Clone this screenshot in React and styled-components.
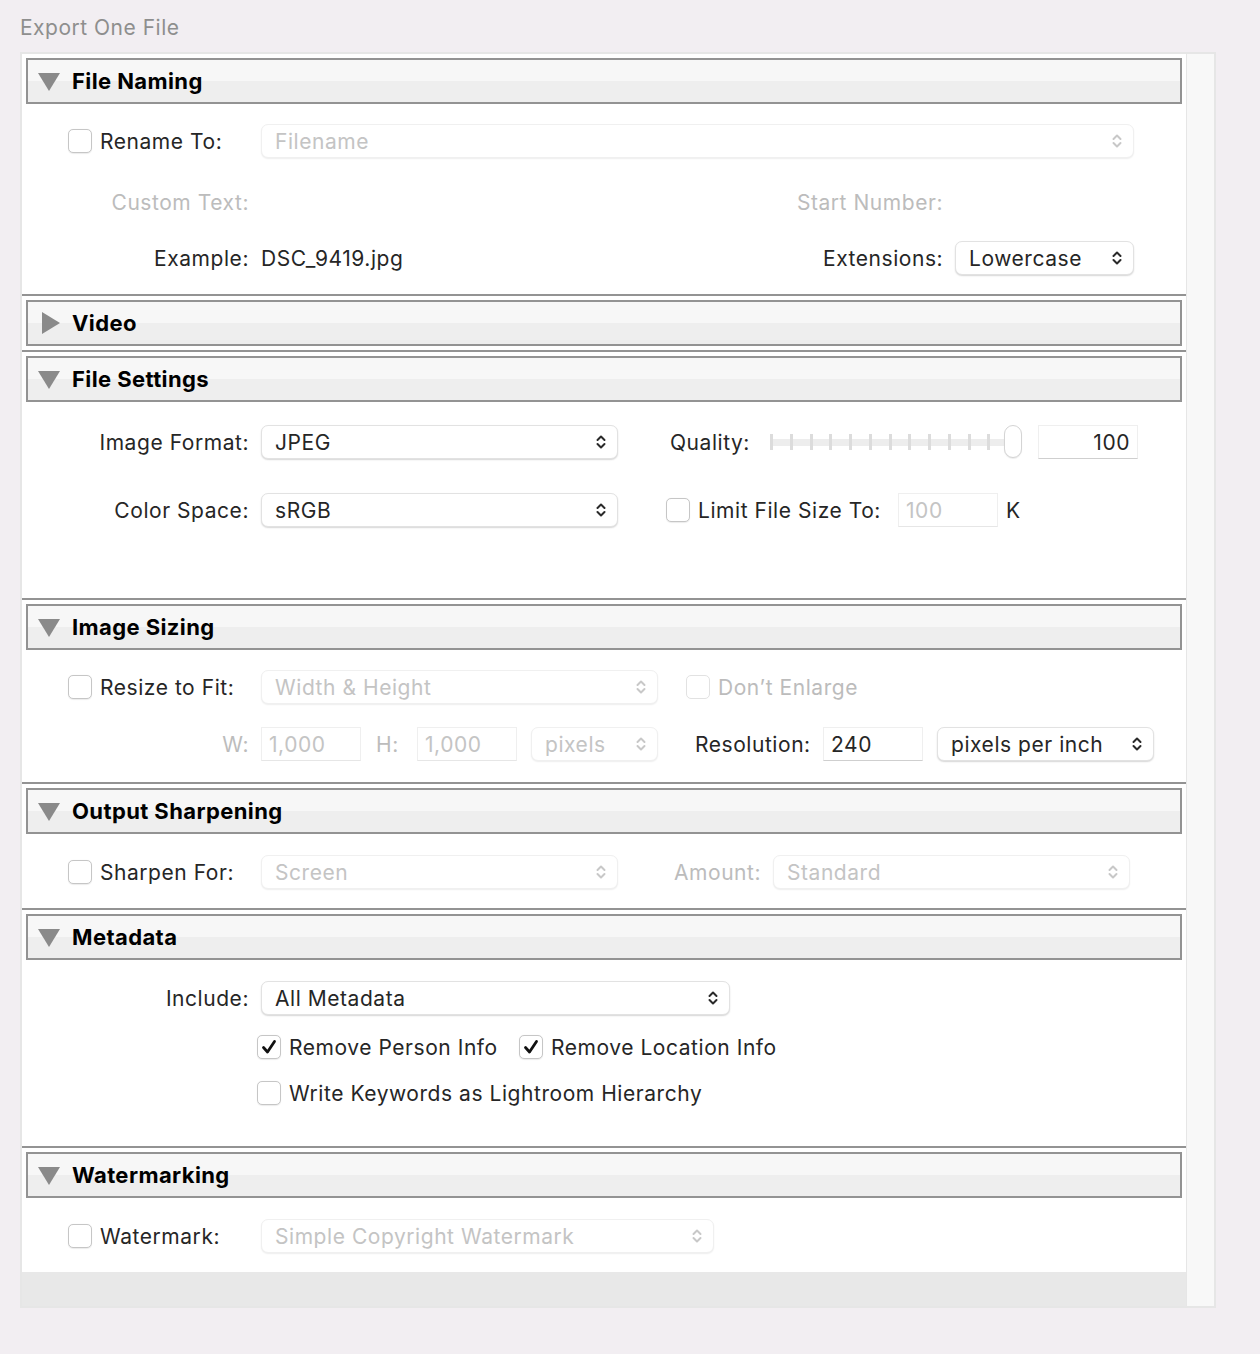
import React from "react";
import styled, { createGlobalStyle } from "styled-components";

const GlobalStyle = createGlobalStyle`
  body {
    margin: 0;
    background: #f2eef2;
    font-family: Inter, "Noto Sans", sans-serif;
    letter-spacing: 0.55px;
  }
`;

const Page = styled.div`
  width: 1260px;
  height: 1354px;
`;

const Title = styled.div`
  height: 52px;
  padding-left: 20px;
  line-height: 56px;
  font-size: 21px;
  letter-spacing: 0.5px;
  color: #8e8e8e;
`;

const Frame = styled.div`
  margin-left: 20px;
  width: 1196px;
  height: 1256px;
  box-sizing: border-box;
  border: 2px solid #e6e6e6;
  background: #e8e8e8;
  display: flex;
`;

const Panel = styled.div`
  width: 1164px;
  align-self: flex-start;
  background: #fff;
`;

const Scrollbar = styled.div`
  flex: 1;
  background: #f8f8f8;
  border-left: 1px solid #e6e6e6;
`;

const Section = styled.section`
  border-top: ${(p) => (p.$first ? "none" : "2px solid #939393")};
  padding-top: 4px;
`;

const Header = styled.div`
  margin: 0 4px;
  height: 46px;
  box-sizing: border-box;
  border: 2px solid #939393;
  background: linear-gradient(#f7f7f7 50%, #eeeeee 50%);
  display: flex;
  align-items: center;
  gap: 12px;
  padding-left: 10px;
  font-size: 22px;
  font-weight: 700;
  letter-spacing: 0.4px;
  color: #000;
`;

const Body = styled.div`
  height: ${(p) => p.$h}px;
  overflow: hidden;
`;

const Row = styled.div`
  display: flex;
  align-items: center;
  height: 34px;
  margin-top: ${(p) => p.$mt || 0}px;
  padding-left: ${(p) => p.$pl || 0}px;
`;

const LabelCell = styled.div`
  width: 239px;
  flex: none;
  box-sizing: border-box;
  padding-right: 12px;
  display: flex;
  align-items: center;
  justify-content: flex-end;
  gap: 8px;
  font-size: 21px;
  white-space: nowrap;
  color: ${(p) => (p.$muted ? "#bcbcbc" : "#262626")};
`;

const CheckCell = styled(LabelCell)`
  justify-content: flex-start;
  padding-left: 46px;
`;

const Text = styled.span`
  flex: none;
  width: ${(p) => (p.$w ? `${p.$w}px` : "auto")};
  margin-left: ${(p) => p.$ml || 0}px;
  text-align: ${(p) => p.$align || "left"};
  font-size: 21px;
  white-space: nowrap;
  color: ${(p) => (p.$muted ? "#bcbcbc" : "#262626")};
`;

const CheckItem = styled.div`
  flex: none;
  display: flex;
  align-items: center;
  gap: 8px;
  width: ${(p) => (p.$w ? `${p.$w}px` : "auto")};
  margin-left: ${(p) => p.$ml || 0}px;
`;

const Box = styled.span`
  flex: none;
  width: 24px;
  height: 24px;
  box-sizing: border-box;
  border: 1px solid ${(p) => (p.$disabled ? "#e2e2e2" : "#c6c6c6")};
  border-radius: 5px;
  background: #fff;
  box-shadow: ${(p) => (p.$disabled ? "none" : "0 0.5px 1px rgba(0,0,0,0.08)")};
  display: flex;
  align-items: center;
  justify-content: center;
`;

const SelectBox = styled.div`
  flex: none;
  width: ${(p) => p.$w}px;
  margin-left: ${(p) => p.$ml || 0}px;
  height: 34px;
  box-sizing: border-box;
  border: 1px solid ${(p) => (p.$disabled ? "#f0f0f0" : "#e2e2e2")};
  border-radius: 7px;
  background: #fff;
  box-shadow: 0 1px 1.5px ${(p) => (p.$disabled ? "rgba(0,0,0,0.07)" : "rgba(0,0,0,0.16)")};
  display: flex;
  align-items: center;
  justify-content: space-between;
  padding: 0 11px 0 13px;
  font-size: 21px;
  white-space: nowrap;
  color: ${(p) => (p.$disabled ? "#c4c4c4" : "#262626")};
`;

const Field = styled.div`
  flex: none;
  width: ${(p) => p.$w || 100}px;
  margin-left: ${(p) => p.$ml || 0}px;
  height: 34px;
  box-sizing: border-box;
  border: 1px solid #efefef;
  border-bottom-color: ${(p) => (p.$disabled ? "#e6e6e6" : "#cfcfcf")};
  background: #fff;
  display: flex;
  align-items: center;
  justify-content: ${(p) => (p.$right ? "flex-end" : "flex-start")};
  padding: 0 7px;
  font-size: 21px;
  color: ${(p) => (p.$disabled ? "#c4c4c4" : "#262626")};
`;

const Slider = styled.div`
  flex: none;
  position: relative;
  width: 252px;
  height: 34px;
  margin-left: ${(p) => p.$ml || 0}px;
  display: flex;
  align-items: center;
`;

const Track = styled.div`
  width: 240px;
  height: 7px;
  background: #ededed;
  display: flex;
  justify-content: space-between;
  align-items: center;
`;

const Tick = styled.span`
  width: 3px;
  height: 16px;
  background: #dcdcdc;
`;

const Knob = styled.span`
  position: absolute;
  right: 0;
  top: 0;
  width: 18px;
  height: 33px;
  box-sizing: border-box;
  border-radius: 9px;
  border: 1px solid #d4d4d4;
  background: #fff;
  box-shadow: 0 1px 1px rgba(0, 0, 0, 0.08);
`;

function Triangle({ open }) {
  return (
    <svg width="22" height="22" viewBox="0 0 22 22">
      {open ? (
        <polygon points="0,3 22,3 11,21" fill="#8a8a8a" />
      ) : (
        <polygon points="4,0 22,11 4,22" fill="#8a8a8a" />
      )}
    </svg>
  );
}

function Chevrons({ disabled }) {
  return (
    <svg width="10" height="16" viewBox="0 0 10 16">
      <path
        d="M1.5 6 L5 2.5 L8.5 6 M1.5 10 L5 13.5 L8.5 10"
        fill="none"
        stroke={disabled ? "#c8c8c8" : "#2a2a2a"}
        strokeWidth="2"
        strokeLinecap="round"
        strokeLinejoin="round"
      />
    </svg>
  );
}

function Checkbox({ checked, disabled }) {
  return (
    <Box $disabled={disabled}>
      {checked && (
        <svg width="18" height="18" viewBox="0 0 18 18">
          <path
            d="M3.5 9.5 L7.5 14 L14.5 3.5"
            fill="none"
            stroke="#111"
            strokeWidth="2.8"
            strokeLinecap="round"
            strokeLinejoin="round"
          />
        </svg>
      )}
    </Box>
  );
}

function Select({ w, ml, disabled, children }) {
  return (
    <SelectBox $w={w} $ml={ml} $disabled={disabled}>
      <span>{children}</span>
      <Chevrons disabled={disabled} />
    </SelectBox>
  );
}

function PanelSection({ title, open = true, first, h, children }) {
  return (
    <Section $first={first}>
      <Header>
        <Triangle open={open} />
        {title}
      </Header>
      <Body $h={h}>{children}</Body>
    </Section>
  );
}

export default function App() {
  return (
    <Page>
      <GlobalStyle />
      <Title>Export One File</Title>
      <Frame>
        <Panel>
          <PanelSection title="File Naming" first h={190}>
            <Row $mt={20}>
              <CheckCell>
                <Checkbox />
                Rename To:
              </CheckCell>
              <Select w={873} disabled>
                Filename
              </Select>
            </Row>
            <Row $mt={27}>
              <LabelCell $muted>Custom Text:</LabelCell>
              <Text $muted $w={682} $align="right">
                Start Number:
              </Text>
            </Row>
            <Row $mt={22}>
              <LabelCell>Example:</LabelCell>
              <Text $w={562}>DSC_9419.jpg</Text>
              <Text $w={120} $align="right">
                Extensions:
              </Text>
              <Select w={179} ml={12}>
                Lowercase
              </Select>
            </Row>
          </PanelSection>
          <PanelSection title="Video" open={false} h={4} />
          <PanelSection title="File Settings" h={196}>
            <Row $mt={23}>
              <LabelCell>Image Format:</LabelCell>
              <Select w={357}>JPEG</Select>
              <Text $ml={52} $w={100}>
                Quality:
              </Text>
              <Slider>
                <Track>
                  {Array.from({ length: 13 }).map((_, i) => (
                    <Tick key={i} />
                  ))}
                </Track>
                <Knob />
              </Slider>
              <Field $ml={16} $right>
                100
              </Field>
            </Row>
            <Row $mt={34}>
              <LabelCell>Color Space:</LabelCell>
              <Select w={357}>sRGB</Select>
              <CheckItem $ml={48} $w={232}>
                <Checkbox />
                <Text>Limit File Size To:</Text>
              </CheckItem>
              <Field $disabled>100</Field>
              <Text $ml={8}>K</Text>
            </Row>
          </PanelSection>
          <PanelSection title="Image Sizing" h={132}>
            <Row $mt={20}>
              <CheckCell>
                <Checkbox />
                Resize to Fit:
              </CheckCell>
              <Select w={397} disabled>
                Width &amp; Height
              </Select>
              <CheckItem $ml={28}>
                <Checkbox disabled />
                <Text $muted>Don’t Enlarge</Text>
              </CheckItem>
            </Row>
            <Row $mt={23}>
              <LabelCell $muted>W:</LabelCell>
              <Field $disabled>1,000</Field>
              <Text $muted $ml={15} $w={41}>
                H:
              </Text>
              <Field $disabled>1,000</Field>
              <Select w={127} ml={14} disabled>
                pixels
              </Select>
              <Text $ml={37} $w={128}>
                Resolution:
              </Text>
              <Field>240</Field>
              <Select w={217} ml={14}>
                pixels per inch
              </Select>
            </Row>
          </PanelSection>
          <PanelSection title="Output Sharpening" h={74}>
            <Row $mt={21}>
              <CheckCell>
                <Checkbox />
                Sharpen For:
              </CheckCell>
              <Select w={357} disabled>
                Screen
              </Select>
              <Text $muted $ml={56} $w={99}>
                Amount:
              </Text>
              <Select w={357} disabled>
                Standard
              </Select>
            </Row>
          </PanelSection>
          <PanelSection title="Metadata" h={186}>
            <Row $mt={21}>
              <LabelCell>Include:</LabelCell>
              <Select w={469}>All Metadata</Select>
            </Row>
            <Row $mt={15} $pl={235}>
              <CheckItem $w={262}>
                <Checkbox checked />
                <Text>Remove Person Info</Text>
              </CheckItem>
              <CheckItem>
                <Checkbox checked />
                <Text>Remove Location Info</Text>
              </CheckItem>
            </Row>
            <Row $mt={12} $pl={235}>
              <CheckItem>
                <Checkbox />
                <Text>Write Keywords as Lightroom Hierarchy</Text>
              </CheckItem>
            </Row>
          </PanelSection>
          <PanelSection title="Watermarking" h={74}>
            <Row $mt={21}>
              <CheckCell>
                <Checkbox />
                Watermark:
              </CheckCell>
              <Select w={453} disabled>
                Simple Copyright Watermark
              </Select>
            </Row>
          </PanelSection>
        </Panel>
        <Scrollbar />
      </Frame>
    </Page>
  );
}
